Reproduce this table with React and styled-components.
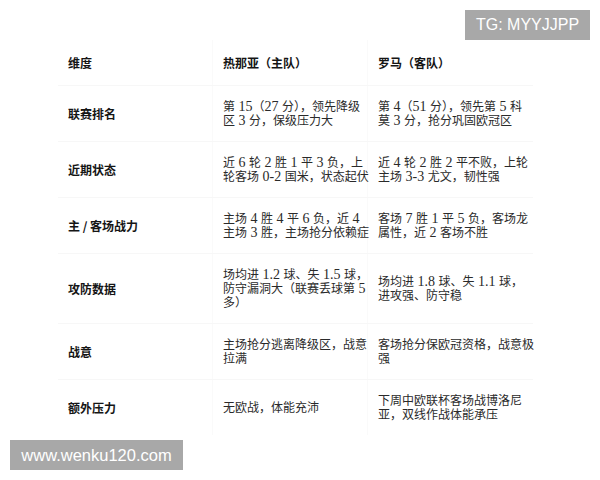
import React from "react";
import styled, { createGlobalStyle } from "styled-components";

const Global = createGlobalStyle`
  html, body { margin: 0; padding: 0; background: #ffffff; }
  body { font-family: "Liberation Serif", "Noto Sans CJK SC", serif; }
`;

const Page = styled.div`
  position: relative;
  width: 600px;
  height: 480px;
  overflow: hidden;
  background: #ffffff;
  padding: 40px 0 0 58px;
  box-sizing: border-box;
`;

const Table = styled.div`
  width: 475px;
  display: flex;
  flex-direction: column;
`;

const Row = styled.div`
  display: grid;
  grid-template-columns: 155px 155px 165px;
  border-bottom: 1px solid ${(p) => (p.$last ? "transparent" : "#f7f7f7")};
`;

const Cell = styled.div`
  display: flex;
  flex-direction: column;
  justify-content: center;
  padding: ${(p) => (p.$head ? "16px 10px 15px" : "14px 10px 13px")};
  font-size: 12px;
  line-height: 14px;
  color: ${(p) => (p.$label || p.$head ? "#151515" : "#2a2a2a")};
  font-weight: ${(p) => (p.$label || p.$head ? 700 : 400)};
  font-family: ${(p) =>
    p.$label || p.$head
      ? '"Noto Sans CJK SC", "Liberation Sans", sans-serif'
      : '"Liberation Serif", "Noto Sans CJK SC", serif'};
  border-right: 1px solid ${(p) => (p.$end ? "transparent" : "#fafafa")};
  white-space: nowrap;
`;

const Line = styled.span`
  display: block;
  height: 14px;
  line-height: 14px;
`;

const Num = styled.span`
  font-family: "Liberation Serif", serif;
  font-size: 14px;
  line-height: 14px;
`;

const Badge = styled.div`
  position: absolute;
  height: 30px;
  display: flex;
  align-items: center;
  justify-content: center;
  background: #a8a8a8;
  color: #ffffff;
  font-family: "Liberation Sans", Arial, sans-serif;
  font-size: ${(p) => p.$size}px;
  ${(p) => p.$pos}
`;

const rows = [
  {
    label: "联赛排名",
    home: ["第 15（27 分），领先降级", "区 3 分，保级压力大"],
    away: ["第 4（51 分），领先第 5 科", "莫 3 分，抢分巩固欧冠区"],
  },
  {
    label: "近期状态",
    home: ["近 6 轮 2 胜 1 平 3 负，上", "轮客场 0-2 国米，状态起伏"],
    away: ["近 4 轮 2 胜 2 平不败，上轮", "主场 3-3 尤文，韧性强"],
  },
  {
    label: "主 / 客场战力",
    home: ["主场 4 胜 4 平 6 负，近 4", "主场 3 胜，主场抢分依赖症"],
    away: ["客场 7 胜 1 平 5 负，客场龙", "属性，近 2 客场不胜"],
  },
  {
    label: "攻防数据",
    home: ["场均进 1.2 球、失 1.5 球，", "防守漏洞大（联赛丢球第 5", "多）"],
    away: ["场均进 1.8 球、失 1.1 球，", "进攻强、防守稳"],
  },
  {
    label: "战意",
    home: ["主场抢分逃离降级区，战意", "拉满"],
    away: ["客场抢分保欧冠资格，战意极", "强"],
  },
  {
    label: "额外压力",
    home: ["无欧战，体能充沛"],
    away: ["下周中欧联杯客场战博洛尼", "亚，双线作战体能承压"],
  },
];

function Text({ value }) {
  const parts = value.split(/( ?[0-9][0-9.\-]* ?)/);
  return parts.map((p, i) =>
    i % 2 === 1 ? <Num key={i}>{p}</Num> : <React.Fragment key={i}>{p}</React.Fragment>
  );
}

function Lines({ items }) {
  return items.map((t, i) => (
    <Line key={i}>
      <Text value={t} />
    </Line>
  ));
}

export default function App() {
  return (
    <>
      <Global />
      <Page>
        <Table>
          <Row>
            <Cell $head>维度</Cell>
            <Cell $head>热那亚（主队）</Cell>
            <Cell $head $end>罗马（客队）</Cell>
          </Row>
          {rows.map((r, i) => (
            <Row key={r.label} $last={i === rows.length - 1}>
              <Cell $label>{r.label}</Cell>
              <Cell>
                <Lines items={r.home} />
              </Cell>
              <Cell $end>
                <Lines items={r.away} />
              </Cell>
            </Row>
          ))}
        </Table>
        <Badge $size={16} $pos="top: 10px; left: 465px; width: 125px;">
          TG: MYYJJPP
        </Badge>
        <Badge $size={16.5} $pos="top: 440px; left: 10px; width: 173px;">
          www.wenku120.com
        </Badge>
      </Page>
    </>
  );
}
